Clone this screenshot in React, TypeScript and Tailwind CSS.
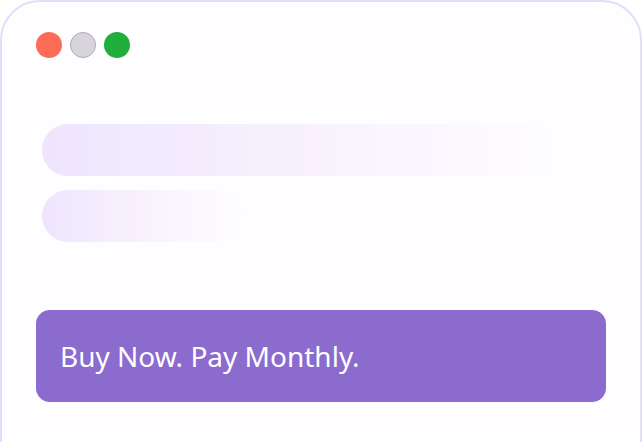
import React from 'react';

const App: React.FC = () => {
  return (
    <div className="h-[442px] w-[642px] overflow-hidden bg-white">
      <div
        className="h-[480px] rounded-[40px] border-2 border-[#e6dcfb] bg-[#fefdff] px-[34px] pt-[30px]"
        style={{ fontFamily: '"Noto Sans", "Open Sans", sans-serif' }}
      >
        <div className="flex items-center gap-[8px]">
          <span className="h-[26px] w-[26px] rounded-full bg-[#fe6b57]" />
          <span className="h-[26px] w-[26px] rounded-full border-[1.5px] border-[#aeaab4] bg-[#d8d4dc]" />
          <span className="h-[26px] w-[26px] rounded-full bg-[#20ae3c]" />
        </div>

        <div className="mt-[66px] flex flex-col gap-[14px] pl-[6px]">
          <div className="h-[52px] w-[514px] rounded-full bg-gradient-to-r from-[#eee5fd] via-[#f8f1fd] to-[#fffcff]/0" />
          <div className="h-[52px] w-[200px] rounded-full bg-gradient-to-r from-[#eee5fd] via-[#f9f2fd] to-[#fffcff]/0" />
        </div>

        <div className="mt-[68px] flex h-[92px] w-[570px] items-center rounded-[14px] bg-[#8b6bce] px-[24px]">
          <span className="text-[28px] leading-none text-white">Buy Now. Pay Monthly.</span>
        </div>
      </div>
    </div>
  );
};

export default App;
